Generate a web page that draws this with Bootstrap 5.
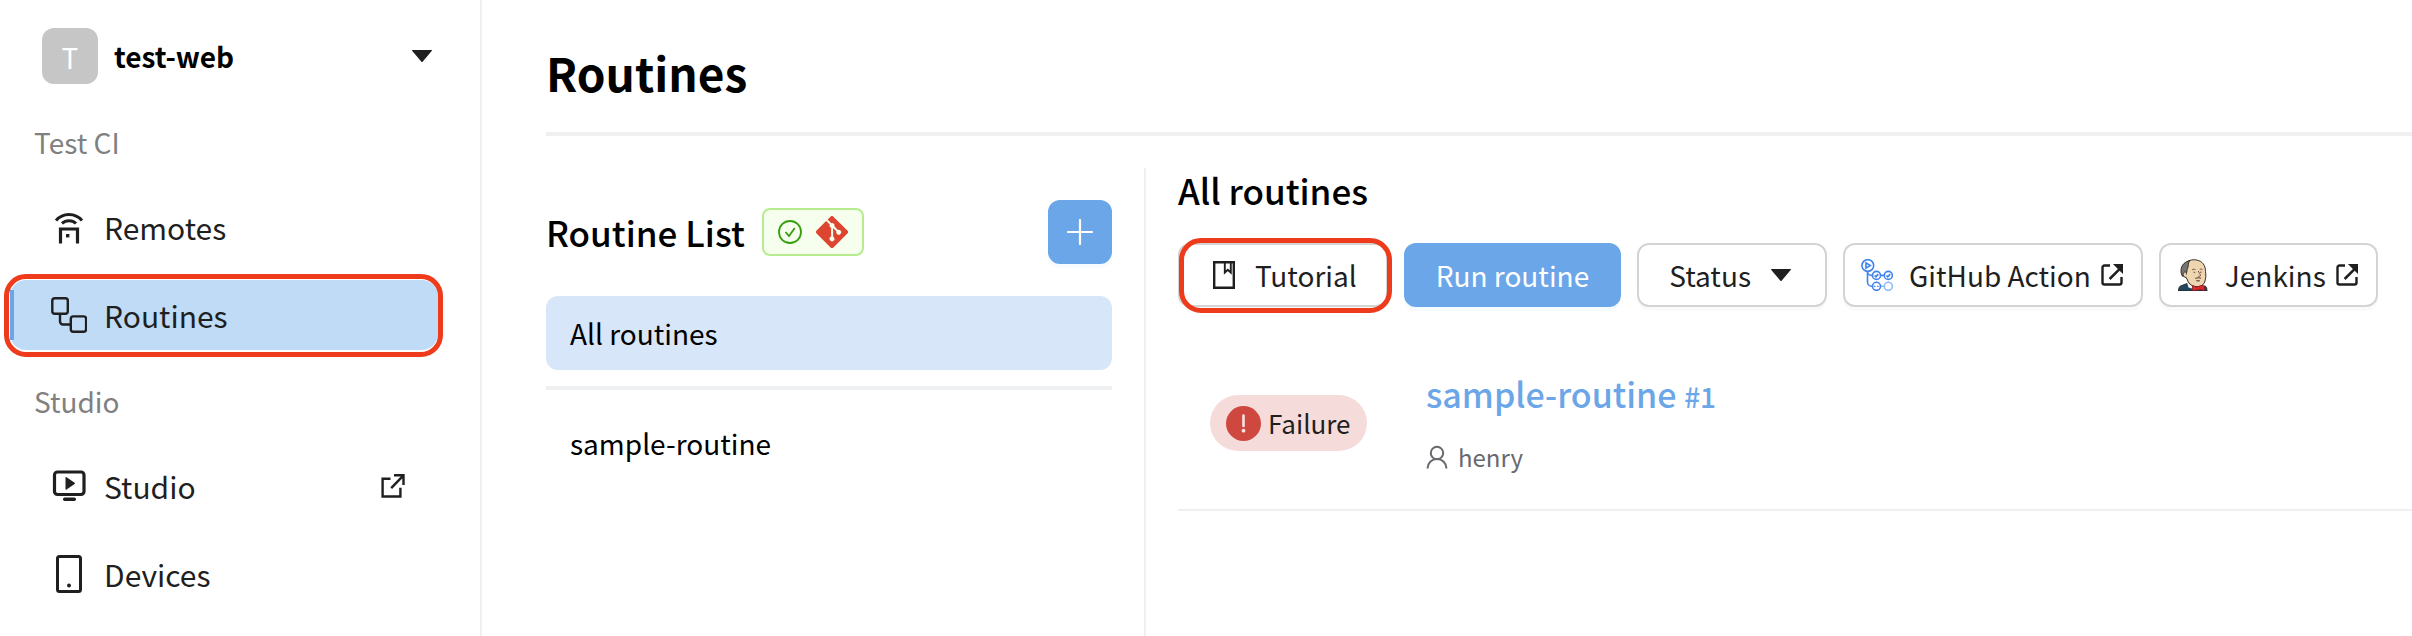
<!DOCTYPE html>
<html lang="en">
<head>
<meta charset="utf-8">
<meta name="viewport" content="width=device-width, initial-scale=1">
<title>Routines</title>
<link href="https://cdn.jsdelivr.net/npm/bootstrap@5.3.0/dist/css/bootstrap.min.css" rel="stylesheet">
<style>
  body { font-family: "Noto Sans CJK KR", "Noto Sans CJK JP", sans-serif; font-size: 28px; line-height: 40px; color: #000; background: #fff; }
  svg { display: block; flex: none; }
  .ink { color: #1f1f1f; }

  .side { width: 482px; flex: none; padding: 28px 42px 16px 10px; border-right: 2px solid #f0f0f0; }
  .project { padding: 0 6px 0 32px; gap: 16px; height: 56px; width: 100%; margin-bottom: 38px; border: 0; background: none; color: #000; font-weight: 700; }
  .avatar { width: 56px; height: 56px; border-radius: 12px; background: #c6c6c6; color: #fff; font-weight: 400; line-height: 58px; text-align: center; }
  .side-label { font-size: 28px; font-weight: 400; line-height: 40px; color: #808080; margin: 0 0 30px 24px; }
  .side-menu { gap: 18px; margin-bottom: 31px; }
  .side-link { height: 70px; padding: 0 33px 0 41px; gap: 17px; font-size: 30px; color: #1f1f1f; text-decoration: none; border-radius: 16px; }
  .side-link.current { background: #bfdbf6; }
  .side-link.current::before { content: ""; position: absolute; left: 0; top: 10px; bottom: 10px; width: 4px; background: #6ba6e8; }
  .ringed { position: relative; }
  .ringed::after { content: ""; position: absolute; border: 5px solid #ee3b1c; border-radius: 22px; pointer-events: none; }
  .side-link.ringed::after { inset: -6px -5px -7px -6px; }

  .page { padding-left: 64px; min-width: 0; }
  .page-head { padding: 40px 0 28px; border-bottom: 4px solid #f0f0f0; }
  h1 { font-size: 46px; line-height: 64px; font-weight: 700; margin: 0; }
  h2 { font-size: 35px; line-height: 44px; font-weight: 500; margin: 0; }
  .panes { margin-top: 32px; }
  .list-pane { flex: 0 0 600px; padding: 32px 32px 0 0; border-right: 2px solid #f0f0f0; }
  .list-head { margin-bottom: 32px; }
  .git-tag { width: 102px; height: 48px; margin-left: 17px; border: 2px solid #b7eb8f; border-radius: 8px; background: #f6ffed; gap: 14px; }
  .tools { margin-top: 31px; }
  .tool { height: 64px; border-radius: 12px; font-size: 28px; line-height: 40px; border: 2px solid #d4d4d4; background: #fff; color: #1f1f1f; box-shadow: 0 4px 0 rgba(0,0,0,.02); padding: 0 30px; text-decoration: none; }
  .tool.main { background: #6ba6e8; border-color: #6ba6e8; color: #fff; box-shadow: 0 4px 0 rgba(5,145,255,.04); }
  .tool.guide { padding: 0 29px 0 33px; gap: 20px; }
  .tool.guide::after { inset: -7px -6px -8px -1px; }
  .tool.filter { padding-right: 34px; gap: 20px; }
  .tool.add { width: 64px; padding: 0; }
  .tool.linked { padding: 0 18px 0 16px; gap: 10px; }
  .brand { margin-right: 6px; }
  .pick { height: 74px; padding: 0 24px; border-radius: 12px; color: #000; text-decoration: none; }
  .pick.on { background: #d7e6f8; }
  .rule { height: 4px; margin: 16px 0; background: #eff0f1; }

  .runs-pane { padding-left: 32px; min-width: 0; }
  .run { padding: 34px 0 34px 32px; border-bottom: 2px solid #f0f0f0; margin-top: 30px; }
  .state-cell { width: 216px; flex: none; }
  .state { height: 56px; padding: 0 16px; gap: 7px; border-radius: 28px; background: #f6dbdb; font-size: 26px; }
  .run-link { font-size: 34px; line-height: 46px; font-weight: 500; color: #6ba6e8; text-decoration: none; }
  .run-no { font-size: 28px; line-height: 28px; }
  .run-by { font-size: 24px; line-height: 36px; color: #68686e; gap: 10px; margin-top: 22px; }
</style>
</head>
<body>
<svg width="0" height="0" class="position-absolute" aria-hidden="true">
  <symbol id="ext" viewBox="0 0 22 22">
    <path d="M9 1.500H3.500a2 2 0 0 0-2 2v15a2 2 0 0 0 2 2h15a2 2 0 0 0 2-2V13" fill="none" stroke="currentColor" stroke-width="2.400"/>
    <path d="M12 0h10v10l-3.300-3.300-9.200 9.200-1.800-1.800 9.200-9.200z" fill="currentColor"/>
  </symbol>
  <symbol id="caret" viewBox="0 0 20 12"><path d="M.5 0h19a.5.5 0 0 1 .4.800l-9.300 11a.8.8 0 0 1-1.200 0L.1.800A.5.5 0 0 1 .5 0z" fill="currentColor"/></symbol>
</svg>
<div class="d-flex min-vh-100">
  <nav class="side">
    <button type="button" class="project d-flex align-items-center text-start">
      <span class="avatar">T</span><span class="flex-fill">test-web</span>
      <svg class="ink" width="20" height="12"><use href="#caret"/></svg>
    </button>
    <h3 class="side-label">Test CI</h3>
    <div class="side-menu d-flex flex-column">
      <a href="#" class="side-link d-flex align-items-center">
        <svg width="36" height="36" viewBox="0 0 36 36" fill="none" stroke="#1f1f1f" stroke-width="3">
          <path d="M5 11.500a17 17 0 0 1 26 0M11 14.500a10 10 0 0 1 14 0"/><path d="M9.500 34.500V20h17v14.500" stroke-width="3.200"/><path d="M15 25h3.400v3.400H15z" fill="#1f1f1f" stroke="none"/>
        </svg>
        Remotes
      </a>
      <a href="#" class="side-link current ringed d-flex align-items-center" aria-current="page">
        <svg width="36" height="36" viewBox="0 0 36 36" fill="none" stroke="#1f1f1f" stroke-width="2.400">
          <rect x="1.300" y="1.300" width="15.500" height="15.500" rx="2.500"/><rect x="19.800" y="19.400" width="15.300" height="15.300" rx="2.500"/><path d="M9 17v7.500a3 3 0 0 0 3 3h8"/>
        </svg>
        Routines
      </a>
    </div>
    <h3 class="side-label">Studio</h3>
    <div class="side-menu d-flex flex-column mb-0">
      <a href="#" class="side-link d-flex align-items-center">
        <svg width="36" height="36" viewBox="0 0 36 36">
          <rect x="3.500" y="4" width="29.500" height="22.500" rx="3" fill="none" stroke="#1f1f1f" stroke-width="3.200"/><path d="M14.500 9.700v11.200a.7.7 0 0 0 1.100.5l8-5.500a.7.7 0 0 0 0-1.200l-8-5.500a.7.7 0 0 0-1.100.5z" fill="#1f1f1f"/><rect x="12" y="29.500" width="13" height="3.500" rx="1.700" fill="#1f1f1f"/>
        </svg>
        <span class="flex-fill">Studio</span>
        <svg width="24" height="24" viewBox="0 0 24 24" fill="none" stroke="#1f1f1f" stroke-width="2.400"><path d="M9.500 4.700H1.600V22.500h17.800v-8.800M13 1.300h9.500V11M22.500 1.300l-12.300 12.800"/></svg>
      </a>
      <a href="#" class="side-link d-flex align-items-center">
        <svg width="36" height="40" viewBox="0 0 36 40"><rect x="6.500" y="2.500" width="23" height="35" rx="2" fill="none" stroke="#1f1f1f" stroke-width="3"/><circle cx="18" cy="31.500" r="2" fill="#1f1f1f"/></svg>
        Devices
      </a>
    </div>
  </nav>

  <main class="page flex-fill d-flex flex-column">
    <header class="page-head"><h1>Routines</h1></header>
    <div class="panes d-flex flex-fill">
      <section class="list-pane">
        <div class="list-head d-flex align-items-center">
          <h2>Routine List</h2>
          <span class="git-tag d-flex align-items-center justify-content-center">
            <svg width="24" height="24" viewBox="0 0 24 24" fill="none" stroke="#389e0d" stroke-width="1.800"><circle cx="12" cy="12" r="11"/><path d="M7.500 12l3.500 4 5.800-8"/></svg>
            <svg width="32" height="32" viewBox="0 0 92 92"><path fill="#de4530" d="M90.156 41.965 50.036 1.848a5.918 5.918 0 0 0-8.372 0l-8.328 8.332 10.566 10.566a7.030 7.030 0 0 1 7.230 1.684 7.034 7.034 0 0 1 1.669 7.277l10.187 10.184a7.028 7.028 0 0 1 7.278 1.672 7.040 7.040 0 0 1 0 9.957 7.050 7.050 0 0 1-9.965 0 7.044 7.044 0 0 1-1.528-7.660l-9.500-9.497V59.360a7.040 7.040 0 0 1 1.860 11.290 7.040 7.040 0 0 1-9.957 0 7.040 7.040 0 0 1 0-9.958 7.060 7.060 0 0 1 2.304-1.539V33.926a7.049 7.049 0 0 1-3.820-9.234L29.242 14.272 1.730 41.777a5.925 5.925 0 0 0 0 8.371L41.852 90.270a5.925 5.925 0 0 0 8.370 0l39.934-39.934a5.925 5.925 0 0 0 0-8.371"/></svg>
          </span>
          <button type="button" class="tool main add ms-auto d-flex align-items-center justify-content-center" aria-label="Add routine">
            <svg width="26" height="26" viewBox="0 0 26 26"><path d="M13 1v24M1 13h24" stroke="#fff" stroke-width="2.200" stroke-linecap="round"/></svg>
          </button>
        </div>
        <a href="#" class="pick on d-flex align-items-center">All routines</a>
        <div class="rule"></div>
        <a href="#" class="pick d-flex align-items-center">sample-routine</a>
      </section>

      <section class="runs-pane flex-fill">
        <h2>All routines</h2>
        <div class="tools d-flex flex-wrap gap-3">
          <a href="#" class="tool guide ringed d-flex align-items-center">
            <svg width="22" height="28" viewBox="0 0 22 28" fill="none" stroke="#1f1f1f"><path d="M1.200 1.200h19.600v25.600H1.200z" stroke-width="2.400"/><path d="M11.800 1v10.500l3-2.800 3 2.800V1" stroke-width="1.900"/></svg>
            Tutorial
          </a>
          <button type="button" class="tool main">Run routine</button>
          <button type="button" class="tool filter d-flex align-items-center">Status<svg class="ink" width="20" height="12"><use href="#caret"/></svg></button>
          <a href="#" class="tool linked d-flex align-items-center">
            <svg width="32" height="32" viewBox="0 0 32 32" class="brand" fill="none" stroke="#3f83f0" stroke-width="1.600">
              <circle cx="6.800" cy="6.500" r="5.900"/><path d="M5 3.900v5.200l4.300-2.600z"/>
              <path d="M6.500 12.500v10.500a4.300 4.300 0 0 0 4.300 4.300h.500M6.500 12.500a4 4 0 0 0 4 3.900h1M19.500 16.400h4"/><path d="M19.500 27.300h4" stroke="#8fb9fa"/>
              <circle cx="15.500" cy="16.400" r="4"/><circle cx="27.300" cy="16.400" r="4"/><circle cx="15.500" cy="27.300" r="4"/><circle cx="27.300" cy="27.300" r="4" stroke="#8fb9fa"/>
              <path d="M13.600 16.500l1.300 1.300 2.500-2.700M25.400 16.500l1.300 1.300 2.500-2.700"/><path d="M13 27.300h1.500M16.200 27.300h1.500" stroke-width="1.300"/>
            </svg>
            GitHub Action
            <svg width="22" height="22"><use href="#ext"/></svg>
          </a>
          <a href="#" class="tool linked d-flex align-items-center">
            <svg width="32" height="32" viewBox="0 0 32 32" class="brand">
              <path d="M1.500 32c.1-3 .8-4.800 2.700-5.300L10 24.500l12 3 6-.5c1.600.6 2 2.500 2 5z" fill="#24465c" stroke="#1d1a18" stroke-width=".8"/>
              <path d="M10 23.500l1.500 5 8.500 2.500 2-2.500z" fill="#f7f3ee"/>
              <path d="M7.500 16C5.500 13 5.500 8 8 5c2.500-3.600 7-4.800 11.500-4 6 1 9 5.500 9 11.500 0 1.500.6 3 .3 5-.3 3-1 6.500-3 8.300-2 1.700-5.300 2.300-8.300 1.700-3.500-.8-6.500-3.500-7.500-7.500z" fill="#f0d6b0" stroke="#1d1a18" stroke-width=".9"/>
              <path d="M13 1.600C8 2.500 4.500 6 4 10.500c-.3 3 .3 5 1.600 7l3.200-1.500 1.200-3.800c-.2-2.400 1.400-3.600 1.300-5.700C11.200 4.500 11.800 3 13 1.600z" fill="#77736e" stroke="#1d1a18" stroke-width=".8"/>
              <path d="M8.700 13.200c-1.700-.5-2.700.8-2.500 2.400.2 1.700 1.300 3.100 2.900 2.700" fill="#f0d6b0" stroke="#1d1a18" stroke-width=".8"/>
              <path d="M15 11c1-.9 2.300-1 3.500-.4M22.700 10.600c.9-.6 1.900-.6 2.800 0M16.500 13.300h1.800M23 13.200h1.700M21.300 12c.3 1.800 2.200 3 2.200 4.300 0 .9-1.300 1.200-2.300.8" fill="none" stroke="#4b3526" stroke-width=".8"/>
              <path d="M18.300 19.600c1.800-1 3.800-1 5.700-.4M19.300 21.500c1.200.5 2.400.4 3.400-.1" fill="none" stroke="#5a4031" stroke-width="1.100"/>
              <path d="M15.500 26.500l4.500 1.600 5-1.800 2.500.8-.2 4.900-3-1.300-4.500.5-4.300.6z" fill="#e02b2f" stroke="#7d1517" stroke-width=".7"/>
              <circle cx="21.500" cy="29" r="1.500" fill="#ef3d3a" stroke="#7d1517" stroke-width=".6"/>
            </svg>
            Jenkins
            <svg width="22" height="22"><use href="#ext"/></svg>
          </a>
        </div>

        <article class="run d-flex align-items-center">
          <div class="state-cell">
            <span class="state ink d-inline-flex align-items-center align-top">
              <svg width="35" height="35" viewBox="0 0 35 35"><circle cx="17.500" cy="17.500" r="17.500" fill="#cf4840"/><path d="M17.500 9.500v10.500" stroke="#fbe3e1" stroke-width="2.600" stroke-linecap="round"/><circle cx="17.500" cy="24.700" r="1.900" fill="#fbe3e1"/></svg>
              Failure
            </span>
          </div>
          <div>
            <a href="#" class="run-link d-block">sample-routine <span class="run-no">#1</span></a>
            <div class="run-by d-flex align-items-center">
              <svg width="22" height="24" viewBox="0 0 22 24" fill="none" stroke="#68686e" stroke-width="2"><circle cx="11" cy="8" r="6.200"/><path d="M1.500 23.500a9.500 9.500 0 0 1 19 0"/></svg>
              henry
            </div>
          </div>
        </article>
      </section>
    </div>
  </main>
</div>
<script src="https://cdn.jsdelivr.net/npm/bootstrap@5.3.0/dist/js/bootstrap.bundle.min.js"></script>
</body>
</html>
